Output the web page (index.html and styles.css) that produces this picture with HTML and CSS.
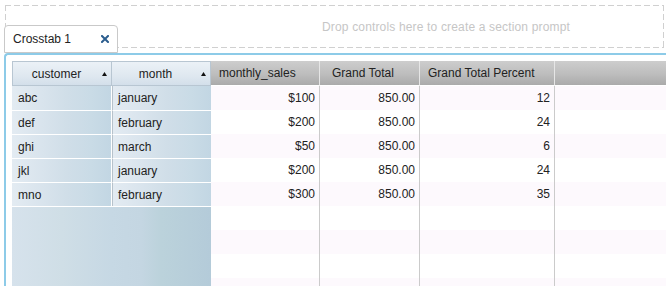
FILE: index.html
```html
<!DOCTYPE html>
<html>
<head>
<meta charset="utf-8">
<link rel="stylesheet" href="styles.css">
</head>
<body>
<div class="prompt-zone"><span>Drop controls here to create a section prompt</span></div>
<div class="tab">
  <span>Crosstab 1</span>
  <svg class="close" width="8" height="8" viewBox="0 0 8 8"><path d="M1 1 L7 7 M7 1 L1 7" stroke="#2b5d8e" stroke-width="2" stroke-linecap="square"/></svg>
</div>
<div class="frame">
  <div class="crosstab">
    <div class="rh-head first"><span class="lbl">customer</span><svg class="sort" width="5" height="4" viewBox="0 0 5 4"><path d="M2.5 0 L5 4 L0 4 Z" fill="#111"/></svg></div>
    <div class="rh-head"><span class="lbl">month</span><svg class="sort" width="5" height="4" viewBox="0 0 5 4"><path d="M2.5 0 L5 4 L0 4 Z" fill="#111"/></svg></div>
    <div class="dh sales">monthly_sales</div>
    <div class="dh total">Grand Total</div>
    <div class="dh pct">Grand Total Percent</div>
    <div class="dh rest"></div>

    <div class="rh c1 r1">abc</div><div class="rh c2 r1">january</div>
    <div class="dc line odd">$100</div><div class="dc line odd">850.00</div><div class="dc line odd">12</div><div class="dc odd"></div>

    <div class="rh c1 sep">def</div><div class="rh c2 sep">february</div>
    <div class="dc line">$200</div><div class="dc line">850.00</div><div class="dc line">24</div><div class="dc"></div>

    <div class="rh c1 sep">ghi</div><div class="rh c2 sep">march</div>
    <div class="dc line odd">$50</div><div class="dc line odd">850.00</div><div class="dc line odd">6</div><div class="dc odd"></div>

    <div class="rh c1 sep">jkl</div><div class="rh c2 sep">january</div>
    <div class="dc line">$200</div><div class="dc line">850.00</div><div class="dc line">24</div><div class="dc"></div>

    <div class="rh c1 sep">mno</div><div class="rh c2 sep">february</div>
    <div class="dc line odd">$300</div><div class="dc line odd">850.00</div><div class="dc line odd">35</div><div class="dc odd"></div>

    <div class="rh-blank"></div>
    <div class="dc line"></div><div class="dc line"></div><div class="dc line"></div><div class="dc"></div>
    <div class="dc line odd"></div><div class="dc line odd"></div><div class="dc line odd"></div><div class="dc odd"></div>
    <div class="dc line"></div><div class="dc line"></div><div class="dc line"></div><div class="dc"></div>
    <div class="dc line odd"></div><div class="dc line odd"></div><div class="dc line odd"></div><div class="dc odd"></div>
  </div>
</div>
</body>
</html>
```

FILE: styles.css
```css
* { box-sizing: border-box; }
html, body {
  margin: 0;
  height: 100%;
  overflow: hidden;
  background: #fff;
  font-family: "Liberation Sans", Arial, sans-serif;
  font-size: 12px;
  color: #222;
}

.prompt-zone {
  margin: 5px 2px 0 5px;
  height: 43px;
  display: flex;
  align-items: center;
  padding-left: 317px;
  color: #c6c6c6;
  letter-spacing: 0.16px;
  background-image:
    repeating-linear-gradient(90deg, #d0d0d0 0 6px, transparent 6px 9px),
    repeating-linear-gradient(90deg, #d0d0d0 0 6px, transparent 6px 9px),
    repeating-linear-gradient(180deg, #d0d0d0 0 6px, transparent 6px 9px),
    repeating-linear-gradient(180deg, #d0d0d0 0 6px, transparent 6px 9px);
  background-size: 100% 1px, 100% 1px, 1px 100%, 1px 100%;
  background-position: left top, left bottom, left top, right top;
  background-repeat: no-repeat;
}

.tab {
  position: relative;
  z-index: 1;
  margin: -23px 0 0 4px;
  width: 114px;
  height: 28px;
  border: 1px solid #c9c9c9;
  border-radius: 4px 4px 0 0;
  background: #fff;
  display: flex;
  align-items: center;
  justify-content: space-between;
  padding: 0 8px;
  color: #222;
}
.close { display: block; }

.frame {
  margin-left: 4px;
  height: 233px;
  overflow: hidden;
  border-top: 2px solid #8dcbe8;
  border-left: 2px solid #8dcbe8;
  border-top-left-radius: 4px;
  padding: 6px 0 0 6px;
}

.crosstab {
  display: grid;
  grid-template-columns: 100px 99px 109px 100px 135px 1fr;
  grid-template-rows: 25px repeat(8, 24px) 8px;
  height: 225px;
  overflow: hidden;
}

.rh-head {
  display: flex;
  align-items: center;
  border: 1px solid #b8c6d2;
  border-left: none;
  background: linear-gradient(180deg, #ebf1f7 0%, #dfe8f0 60%, #d3dfea 100%);
  padding: 0 4px 0 0;
}
.rh-head.first { border-left: 1px solid #b8c6d2; }
.rh-head .lbl { flex: 1; text-align: center; }
.rh-head .sort { display: block; margin-left: 2px; }

.dh {
  display: flex;
  align-items: center;
  background: linear-gradient(180deg, #cdcdcd 0%, #bdbdbd 55%, #aaaaaa 100%);
  border-right: 1px solid #e6e6e6;
  border-bottom: 1px solid #fff;
  padding-left: 8px;
}
.dh.total { padding-left: 12px; }
.dh.rest { border-right: none; }

.rh {
  display: flex;
  align-items: center;
  padding-left: 6px;
  color: #222;
  background: linear-gradient(90deg, #e3ebf2 0%, #d9e4ed 30%, #d0dee8 55%, #c9dbe6 80%, #c2d6e3 100%);
}
.rh.c1 { border-right: 1px solid #fff; }
.rh.c2 { border-left: 1px solid #b7c2cb; padding-left: 5px; }
.rh.sep { border-top: 1px solid #fff; }

.rh-blank {
  grid-column: 1 / span 2;
  grid-row: 7 / span 4;
  border-top: 1px solid #fff;
  background: linear-gradient(90deg, #d6e2ec 0%, #cfdee6 25%, #c6d8e4 50%, #c4d6e2 65%, #bbd2db 75%, #b4cbd9 100%);
}

.dc {
  display: flex;
  align-items: center;
  justify-content: flex-end;
  padding-right: 4px;
  background: #fff;
}
.dc.odd { background: #fdf9fd; }
.dc.line { border-right: 1px solid #cbcbcb; }
```
